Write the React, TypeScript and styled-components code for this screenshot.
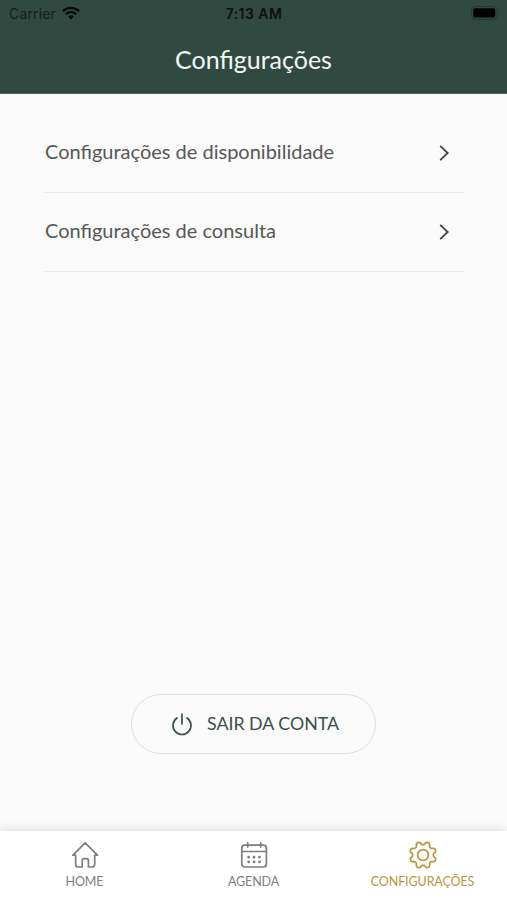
import React from "react";
import styled, { createGlobalStyle } from "styled-components";

const GlobalStyle = createGlobalStyle`
  * { box-sizing: border-box; }
  body { margin: 0; background: #fafafa; font-family: Lato, "Open Sans", sans-serif; }
`;

const Screen = styled.div`
  width: 100%;
  height: 900px;
  display: flex;
  flex-direction: column;
  background: #fafafa;
  overflow: hidden;
`;

const Header = styled.header`
  height: 94px;
  flex: none;
  background: #304941;
  border-bottom: 1px solid #53675f;
`;

const StatusBar = styled.div`
  height: 27px;
  padding: 0 7px 0 9px;
  display: grid;
  grid-template-columns: 1fr auto 1fr;
  align-items: center;
  font-family: Inter, sans-serif;
  color: #0b100e;
`;

const Carrier = styled.div`
  display: flex;
  align-items: center;
  gap: 6px;
  font-size: 14px;
  letter-spacing: 0.15px;
  color: #14201c;

  svg {
    margin-top: -2px;
  }
`;

const Clock = styled.div`
  font-size: 14px;
  font-weight: 600;
  letter-spacing: 0.45px;
  margin-left: -1px;
`;

const Battery = styled.svg`
  justify-self: end;
  margin-top: -1px;
`;

const Title = styled.h1`
  margin: 0;
  height: 64px;
  line-height: 64px;
  text-align: center;
  font-size: 25px;
  font-weight: 400;
  color: #f4f8f6;
`;

const List = styled.nav`
  margin: 20px 43px 0;
  flex: 1;
`;

const Button = styled.button`
  display: flex;
  align-items: center;
  margin: 0;
  padding: 0;
  border: 0;
  background: none;
  font: inherit;
`;

const Row = styled(Button)`
  width: 100%;
  height: 79px;
  padding: 0 13px 0 2px;
  justify-content: space-between;
  border-bottom: 1px solid #ebebeb;
  font-size: 20px;
  color: #555856;
`;

const RowLabel = styled.span`
  padding-bottom: 4px;
`;

const Logout = styled(Button)`
  width: 245px;
  height: 60px;
  margin: 0 auto 77px;
  flex: none;
  gap: 14px;
  padding: 0 0 1px 39px;
  border: 1px solid #dfdfdf;
  border-radius: 30px;
  font-size: 17.8px;
  color: #3c4f48;
`;

const LogoutLabel = styled.span`
  padding-bottom: 1px;
`;

const TabBar = styled.nav`
  height: 69px;
  flex: none;
  display: grid;
  grid-template-columns: repeat(3, 1fr);
  background: #fff;
  box-shadow: 0 -1px 10px rgba(0, 0, 0, 0.12);
`;

const Tab = styled(Button)<{ $active?: boolean }>`
  flex-direction: column;
  padding-top: 9px;
  gap: 4px;
  font-size: 12.5px;
  letter-spacing: -0.1px;
  line-height: 16px;
  color: ${(p) => (p.$active ? "#b8963f" : "#7b7f7d")};
`;

const gearPath = (() => {
  const points: string[] = [];
  for (let i = 0; i < 160; i++) {
    const a = (i / 160) * Math.PI * 2;
    const r = 11.9 - 1.6 * Math.tanh(1.8 * Math.cos(8 * a));
    points.push(`${(15 + r * Math.sin(a)).toFixed(2)} ${(15 - r * Math.cos(a)).toFixed(2)}`);
  }
  return `M${points.join("L")}Z`;
})();

const Icon = ({ children }: { children: React.ReactNode }) => (
  <svg width="30" height="30" viewBox="0 0 30 30" fill="none" stroke="currentColor" strokeWidth="1.7" strokeLinecap="round" strokeLinejoin="round">
    {children}
  </svg>
);

const Chevron = () => (
  <svg width="12" height="18" viewBox="0 0 12 18" fill="none" stroke="#3f4341" strokeWidth="1.8">
    <path d="M1.2 1.8 8.7 9 1.2 16.2" />
  </svg>
);

export default function App() {
  return (
    <>
      <GlobalStyle />
      <Screen>
        <Header>
          <StatusBar>
            <Carrier>
              <span>Carrier</span>
              <svg width="18" height="14" viewBox="0 0 18 14" fill="none" stroke="#050807" strokeWidth="2.3">
                <path d="M1 5.2C5.7.8 12.3.8 17 5.2M3.9 8.2C6.9 5.5 11.1 5.5 14.1 8.2" />
                <path d="M9 13.4 6.1 10.5Q9 8 11.9 10.5Z" fill="#050807" stroke="none" />
              </svg>
            </Carrier>
            <Clock>7:13 AM</Clock>
            <Battery width="29" height="14" viewBox="0 0 29 14">
              <rect x=".5" y=".5" width="25.5" height="13" rx="4" fill="none" stroke="#23372f" />
              <rect x="2.2" y="2.3" width="22" height="9.2" rx="2" fill="#000" />
              <path d="M27.3 4.8q1.5 2.2 0 4.4z" fill="#23372f" />
            </Battery>
          </StatusBar>
          <Title>Configurações</Title>
        </Header>
        <List>
          <Row>
            <RowLabel>Configurações de disponibilidade</RowLabel>
            <Chevron />
          </Row>
          <Row>
            <RowLabel>Configurações de consulta</RowLabel>
            <Chevron />
          </Row>
        </List>
        <Logout>
          <svg width="22" height="24" viewBox="0 0 22 24" fill="none" stroke="currentColor" strokeWidth="1.7" strokeLinecap="round">
            <path d="M11 2V12M6 6A9 9 0 1 0 16 6" />
          </svg>
          <LogoutLabel>SAIR DA CONTA</LogoutLabel>
        </Logout>
        <TabBar>
          <Tab>
            <Icon>
              <path d="M2.9 15.2 15.2 2.9 27.5 15.2H24.7V24.2Q24.7 27 21.9 27H18.4V20.5Q18.4 18.6 16.7 18.6H13.9Q12.2 18.6 12.2 20.5V27H8.4Q5.6 27 5.6 24.2V15.2Z" />
            </Icon>
            HOME
          </Tab>
          <Tab>
            <Icon>
              <rect x="2.8" y="5.2" width="24.6" height="21.8" rx="3" />
              <path d="M2.8 11.5H27.4M8.7 2.8V7M21.7 2.8V7" />
              <path d="M9.6 17.2h.1M15 17.2h.1M20.4 17.2h.1M9.6 21.9h.1M15 21.9h.1M20.4 21.9h.1" strokeWidth="2.7" />
            </Icon>
            AGENDA
          </Tab>
          <Tab $active>
            <Icon>
              <path d={gearPath} />
              <circle cx="15" cy="15" r="5.4" />
            </Icon>
            CONFIGURAÇÕES
          </Tab>
        </TabBar>
      </Screen>
    </>
  );
}
